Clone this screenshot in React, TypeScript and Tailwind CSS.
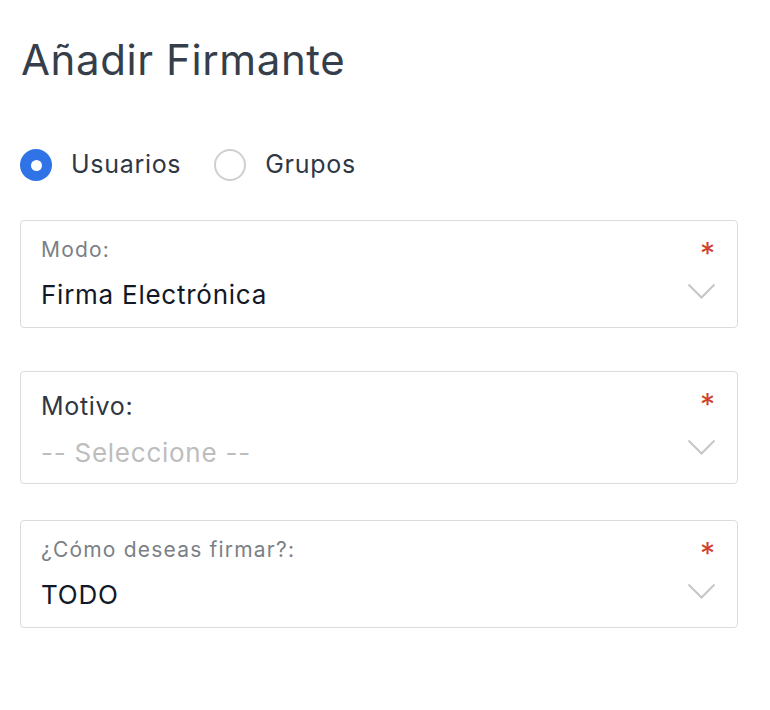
interface SelectBoxProps {
  label: string;
  value: string;
  floating: boolean;
}

function Chevron() {
  return (
    <svg
      className="absolute right-[21px] bottom-[27px]"
      width="29"
      height="17"
      viewBox="0 0 29 17"
      fill="none"
    >
      <polyline points="1.5,1.5 14.5,14.5 27.5,1.5" stroke="#c6c6c6" strokeWidth="2" />
    </svg>
  );
}

function SelectBox({ label, value, floating }: SelectBoxProps) {
  return (
    <div
      className={`relative border border-[#dcdcdc] rounded-[4px] px-5 ${
        floating ? 'h-[108px] pt-[16px]' : 'h-[113px] pt-[19px]'
      }`}
    >
      <span className="absolute right-[22px] top-[17px] text-[30px] leading-none text-[#d0402b]">*</span>
      <div
        className={
          floating
            ? 'h-[26px] text-[21px] leading-[26px] tracking-[1.2px] text-[#7b7f86]'
            : 'h-[30px] text-[25px] leading-[30px] tracking-[0.7px] text-[#2f3744]'
        }
      >
        {label}
      </div>
      <div
        className={`mt-[17px] h-[30px] text-[26px] leading-[30px] tracking-[0.75px] ${
          floating ? 'text-[#111827]' : 'text-[#bdbdbd]'
        }`}
      >
        {value}
      </div>
      <Chevron />
    </div>
  );
}

export default function App() {
  return (
    <div className="min-h-screen bg-white px-5 pt-[36px] font-['Inter',sans-serif]">
      <h1 className="text-[42px] leading-[48px] tracking-[0.6px] text-[#363e4b] pl-[1px]">Añadir Firmante</h1>

      <div className="mt-[65px] flex items-center h-[32px]">
        <label className="flex items-center gap-[19px] mr-[33px]">
          <span className="w-[32px] h-[32px] rounded-full bg-[#2f73e6] flex items-center justify-center">
            <span className="w-[11px] h-[11px] rounded-full bg-white" />
          </span>
          <span className="text-[25px] tracking-[0.7px] text-[#2f3744]">Usuarios</span>
        </label>
        <label className="flex items-center gap-[19px]">
          <span className="w-[32px] h-[32px] rounded-full border-2 border-[#cfcfcf]" />
          <span className="text-[25px] tracking-[0.7px] text-[#2f3744]">Grupos</span>
        </label>
      </div>

      <div className="mt-[39px] w-[718px] flex flex-col">
        <SelectBox label="Modo:" value="Firma Electrónica" floating />
        <div className="mt-[43px]">
          <SelectBox label="Motivo:" value="-- Seleccione --" floating={false} />
        </div>
        <div className="mt-[36px]">
          <SelectBox label="¿Cómo deseas firmar?:" value="TODO" floating />
        </div>
      </div>
    </div>
  );
}
